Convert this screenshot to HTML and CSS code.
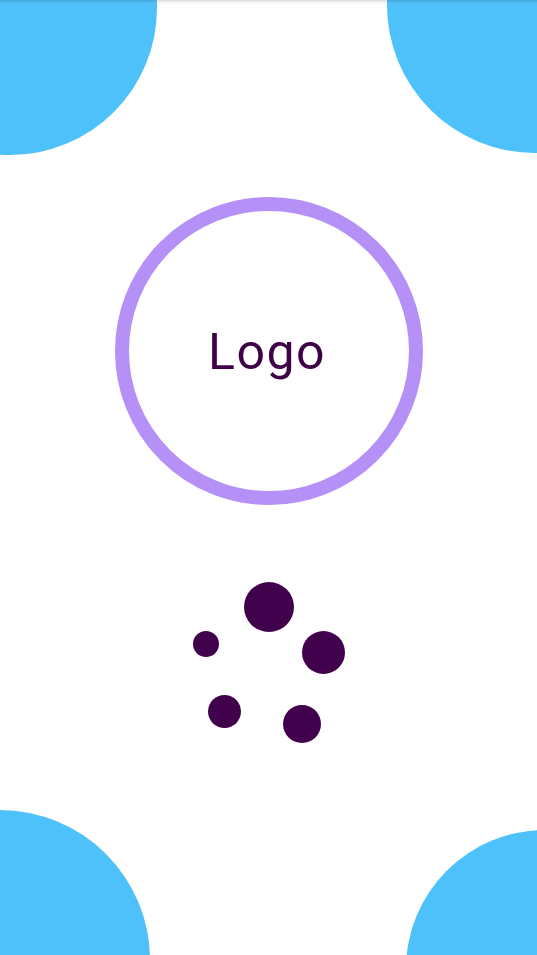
FILE: index.html
```html
<!DOCTYPE html>
<html lang="en">
<head>
<meta charset="utf-8">
<title>Splash</title>
<link rel="stylesheet" href="styles.css">
</head>
<body>
<div class="screen">
  <div class="blob blob-tl"></div>
  <div class="blob blob-tr"></div>
  <div class="blob blob-bl"></div>
  <div class="blob blob-br"></div>
  <div class="top-shade"></div>
  <main class="content">
    <div class="logo"><span class="logo-text">Logo</span></div>
    <div class="spinner" aria-label="Loading">
      <span class="dot d1"></span>
      <span class="dot d2"></span>
      <span class="dot d3"></span>
      <span class="dot d4"></span>
      <span class="dot d5"></span>
    </div>
  </main>
</div>
</body>
</html>
```
FILE: styles.css
```css
html, body {
  margin: 0;
  padding: 0;
  background: #ffffff;
}
.screen {
  position: relative;
  width: 537px;
  height: 955px;
  overflow: hidden;
  background: #ffffff;
  font-family: Roboto, "Noto Sans", sans-serif;
}
.blob {
  position: absolute;
  border-radius: 50%;
  background: #4fc1fa;
}
.blob-tl { left: -137px; top: -139px; width: 294px; height: 294px; }
.blob-tr { left: 387px; top: -143px; width: 296px; height: 296px; }
.blob-bl { left: -150px; top: 810px; width: 300px; height: 300px; }
.blob-br { left: 406px; top: 830px; width: 278px; height: 278px; }
.top-shade {
  position: absolute;
  left: 0;
  top: 0;
  width: 100%;
  height: 5px;
  background: linear-gradient(to bottom, rgba(0,0,0,0.14), rgba(0,0,0,0.04) 50%, rgba(0,0,0,0));
  z-index: 2;
}
.content {
  position: relative;
  z-index: 1;
  display: flex;
  flex-direction: column;
  align-items: center;
  padding-top: 197px;
}
.logo {
  box-sizing: border-box;
  width: 308px;
  height: 308px;
  margin-left: 1px;
  border: 14px solid #b590f6;
  border-radius: 50%;
  display: flex;
  align-items: center;
  justify-content: center;
}
.logo-text {
  font-size: 50px;
  line-height: 1;
  color: #3e0047;
  letter-spacing: 1.5px;
  margin-right: 4px;
  margin-top: 2px;
}
.spinner {
  position: relative;
  width: 160px;
  height: 170px;
  margin-top: 70px;
  margin-left: 3px;
}
.dot {
  position: absolute;
  border-radius: 50%;
  background: #41004b;
}
.d1 { left: 54px; top: 7px; width: 50px; height: 50px; }
.d2 { left: 112px; top: 56px; width: 43px; height: 43px; }
.d3 { left: 3px; top: 56px; width: 26px; height: 26px; }
.d4 { left: 18px; top: 120px; width: 33px; height: 33px; }
.d5 { left: 93px; top: 130px; width: 38px; height: 38px; }
```
